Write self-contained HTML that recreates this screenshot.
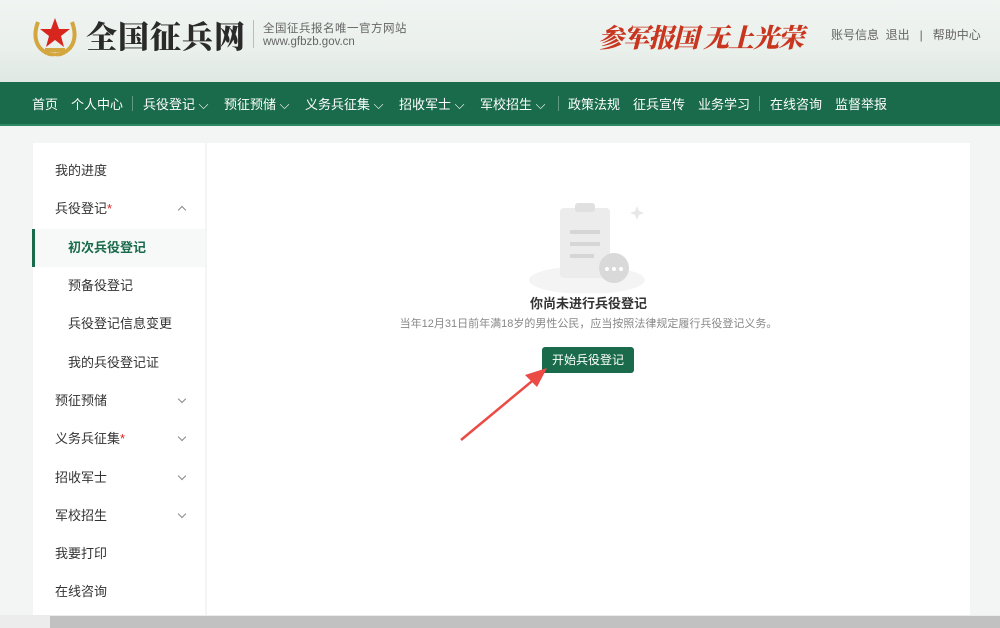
<!DOCTYPE html>
<html><head><meta charset="utf-8"><style>
*{margin:0;padding:0;box-sizing:border-box}
body{width:1000px;height:628px;overflow:hidden;background:#f3f5f4;font-family:"Liberation Sans","Noto Sans CJK SC",sans-serif;position:relative}
.hdr{position:absolute;left:0;top:0;width:1000px;height:82px;background:linear-gradient(180deg,#f0f4f2 0%,#eaf0ec 60%,#dfe8e2 100%)}
.nav{position:absolute;left:0;top:82px;width:1000px;height:44px;background:#196b4b;border-bottom:2px solid #2f8a63}
.nav span{position:absolute;top:12px;color:#fff;font-size:13px;white-space:nowrap}
.sep{position:absolute;top:14px;width:1px;height:15px;background:#5f9a80}
.side{position:absolute;left:33px;top:143px;width:172px;height:472px;background:#fff}
.main{position:absolute;left:207px;top:143px;width:763px;height:472px;background:#fff}
.it{position:absolute;font-size:13px;color:#333;white-space:nowrap}
.chev{position:absolute;width:6px;height:6px;border-right:1px solid #888;border-bottom:1px solid #888;transform:rotate(45deg)}
.star{color:#e02020}
</style></head><body>
<div class="hdr">
 <svg style="position:absolute;left:30px;top:12px" width="50" height="46" viewBox="0 0 50 46">
  <path d="M8 10 Q2 26 10 36 Q18 44 25 42" fill="none" stroke="#d3a640" stroke-width="4"/>
  <path d="M42 10 Q48 26 40 36 Q32 44 25 42" fill="none" stroke="#d3a640" stroke-width="4"/>
  <polygon points="25,6 29,17 40,17 31,24 34,35 25,28 16,35 19,24 10,17 21,17" fill="#d8261f"/>
  <rect x="15" y="36" width="20" height="4" fill="#d3a640"/>
 </svg>
 <div style="position:absolute;left:86px;top:12px;font-family:'Noto Serif CJK SC',serif;font-weight:900;font-size:31px;color:#2a2a2a;letter-spacing:1px">全国征兵网</div>
 <div style="position:absolute;left:253px;top:20px;width:1px;height:28px;background:#bbb"></div>
 <div style="position:absolute;left:263px;top:20px;font-size:11.5px;color:#666;letter-spacing:.5px">全国征兵报名唯一官方网站</div>
 <div style="position:absolute;left:263px;top:36px;font-size:11.5px;color:#666">www.gfbzb.gov.cn</div>
 <div style="position:absolute;left:598px;top:18px;font-family:'Noto Serif CJK SC',serif;font-weight:900;font-style:italic;font-size:26px;color:#c9361f;letter-spacing:-1px">参军报国</div>
 <div style="position:absolute;left:703px;top:18px;font-family:'Noto Serif CJK SC',serif;font-weight:900;font-style:italic;font-size:26px;color:#c9361f;letter-spacing:-1px">无上光荣</div>
 <div style="position:absolute;left:831px;top:26px;font-size:12px;color:#666;white-space:nowrap">账号信息&nbsp;&nbsp;退出&nbsp;&nbsp;&nbsp;|&nbsp;&nbsp;&nbsp;帮助中心</div>
</div>
<div class="nav">
 <span style="left:32px">首页</span><span style="left:71px">个人中心</span><div class="sep" style="left:132px"></div>
 <span style="left:143px">兵役登记 ⌵</span><span style="left:224px">预征预储 ⌵</span><span style="left:305px">义务兵征集 ⌵</span><span style="left:399px">招收军士 ⌵</span><span style="left:480px">军校招生 ⌵</span>
 <div class="sep" style="left:558px"></div>
 <span style="left:568px">政策法规</span><span style="left:633px">征兵宣传</span><span style="left:698px">业务学习</span><div class="sep" style="left:759px"></div>
 <span style="left:770px">在线咨询</span><span style="left:835px">监督举报</span>
</div>
<div class="side">
 <div class="it" style="left:22px;top:17px">我的进度</div>
 <div class="it" style="left:22px;top:55px">兵役登记<span class="star">*</span></div>
 <div class="chev" style="left:146px;top:64px;transform:rotate(-135deg)"></div>
 <div style="position:absolute;left:0;top:86px;width:172px;height:38px;background:#f7f9f8"></div>
 <div style="position:absolute;left:-1px;top:86px;width:3px;height:38px;background:#196b4b"></div>
 <div class="it" style="left:35px;top:94px;color:#196b4b;font-weight:bold">初次兵役登记</div>
 <div class="it" style="left:35px;top:132px">预备役登记</div>
 <div class="it" style="left:35px;top:170px">兵役登记信息变更</div>
 <div class="it" style="left:35px;top:209px">我的兵役登记证</div>
 <div class="it" style="left:22px;top:247px">预征预储</div><div class="chev" style="left:146px;top:253px"></div>
 <div class="it" style="left:22px;top:285px">义务兵征集<span class="star">*</span></div><div class="chev" style="left:146px;top:291px"></div>
 <div class="it" style="left:22px;top:324px">招收军士</div><div class="chev" style="left:146px;top:330px"></div>
 <div class="it" style="left:22px;top:362px">军校招生</div><div class="chev" style="left:146px;top:368px"></div>
 <div class="it" style="left:22px;top:400px">我要打印</div>
 <div class="it" style="left:22px;top:438px">在线咨询</div>
</div>
<div class="main">
 <svg style="position:absolute;left:320px;top:55px" width="130" height="95" viewBox="0 0 130 95">
  <ellipse cx="60" cy="82" rx="58" ry="14" fill="#f4f4f4"/>
  <rect x="33" y="10" width="50" height="70" rx="4" fill="#ececec"/>
  <rect x="48" y="5" width="20" height="9" rx="3" fill="#e0e0e0"/>
  <rect x="43" y="32" width="30" height="4" fill="#d6d6d6"/><rect x="43" y="44" width="30" height="4" fill="#d6d6d6"/><rect x="43" y="56" width="24" height="4" fill="#d6d6d6"/>
  <circle cx="87" cy="70" r="15" fill="#d9d9d9"/>
  <circle cx="80" cy="71" r="2" fill="#fff"/><circle cx="87" cy="71" r="2" fill="#fff"/><circle cx="94" cy="71" r="2" fill="#fff"/>
  <path d="M110 8 l2 5 l5 2 l-5 2 l-2 5 l-2 -5 l-5 -2 l5 -2z" fill="#e8e8e8"/>
 </svg>
 <div style="position:absolute;left:0;width:763px;top:150px;text-align:center;font-size:13px;font-weight:bold;color:#333">你尚未进行兵役登记</div>
 <div style="position:absolute;left:0;width:763px;top:172px;text-align:center;font-size:11px;color:#888">当年12月31日前年满18岁的男性公民，应当按照法律规定履行兵役登记义务。</div>
 <div style="position:absolute;left:335px;top:204px;width:92px;height:26px;background:#196b4b;border-radius:3px;color:#fff;font-size:12px;text-align:center;line-height:26px">开始兵役登记</div>
 <svg style="position:absolute;left:250px;top:220px" width="100" height="80" viewBox="0 0 100 80">
  <line x1="4" y1="77" x2="80" y2="14" stroke="#ec4a45" stroke-width="2.5"/>
  <polygon points="90,5 68,12 80,24" fill="#ec4a45"/>
 </svg>
</div>
<div style="position:absolute;left:0;top:615px;width:1000px;height:13px;background:#ececec"></div>
<div style="position:absolute;left:50px;top:616px;width:950px;height:12px;background:#c1c1c1"></div>
</body></html>
